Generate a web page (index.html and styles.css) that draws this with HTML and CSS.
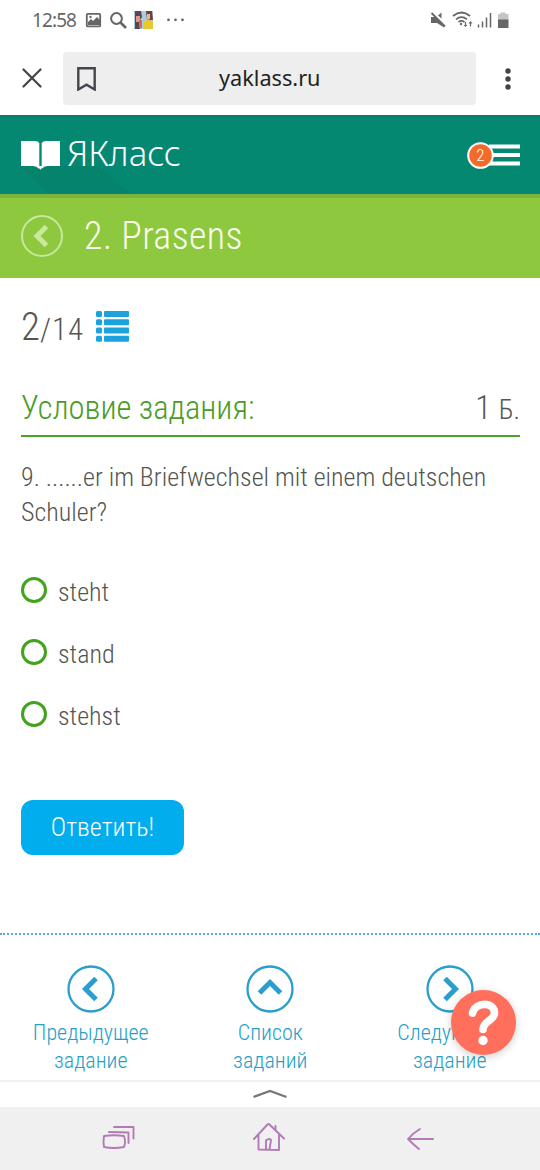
FILE: index.html
```html
<!DOCTYPE html>
<html lang="ru">
<head>
<meta charset="utf-8">
<title>ЯКласс</title>
<link rel="stylesheet" href="styles.css">
</head>
<body>
<div class="status">
  <span class="clock">12:58</span>
  <svg class="status-left" width="106" height="24" viewBox="84 8 106 24">
    <rect x="86.800" y="13.800" width="13.400" height="12.600" rx="1" fill="none" stroke="#666" stroke-width="1.800"/>
    <path d="M88 25v-3l3-3 2 2 4-4 3 3v5z" fill="#666"/><circle cx="90.500" cy="17" r="1.200" fill="#666"/>
    <circle cx="116.500" cy="18.500" r="5.400" fill="none" stroke="#666" stroke-width="2"/><path d="M120.500 22.500l5.500 5.500" stroke="#666" stroke-width="2.600"/>
    <rect x="134" y="11" width="19" height="18" fill="#a8cfdf"/>
    <path d="M135 11h6l1 6-2 3v9h-5v-9z" fill="#5b4650"/><path d="M136 16h4v6h-4z" fill="#df9a87"/>
    <path d="M146 11h6l1 9h-6z" fill="#704038"/><path d="M147 14h3v5h-3z" fill="#e8b59d"/>
    <path d="M143 22l5-3 5 3v7h-10z" fill="#e9c72e"/><path d="M139 20h3v8h-3z" fill="#d86660"/>
    <g fill="#666"><circle cx="168.500" cy="19.800" r="1.400"/><circle cx="175.500" cy="19.800" r="1.400"/><circle cx="182.500" cy="19.800" r="1.400"/></g>
  </svg>
  <svg class="status-right" width="82" height="24" viewBox="429 8 82 24">
    <path d="M431 17h4l9 9.500v1l-7-4.500h-6z" fill="#666"/><path d="M438 15.500l3.500-3v6z" fill="#666"/><path d="M431.500 13l13.500 13.500" stroke="#666" stroke-width="1.800"/>
    <g fill="none" stroke="#666" stroke-width="1.700"><path d="M453 16q8.500-7 17 0M456 19.300q5.500-4.500 11 0M458.500 22q3-2.200 6 0"/></g>
    <circle cx="461" cy="24" r="1.200" fill="#666"/>
    <path d="M463.500 25l2 2 2-2zM468.500 23.500l2-2.500 2 2.500z" fill="#666"/><path d="M465.500 22v4M470.500 22v4.500" stroke="#666" stroke-width="1.200"/>
    <path d="M478.500 24.500v3M482.500 21.500v6M486.500 17.500v10M490.500 13v14.500" stroke="#666" stroke-width="1.500"/>
    <path d="M498 14h2.500v-1.500h5V14h3v6H498z" fill="#c4c4c4"/><path d="M498 19.500h10.500V28H498z" fill="#666"/>
  </svg>
</div>
<div class="browser">
  <svg width="20" height="20" viewBox="0 0 20 20"><path d="M1.500 1.500l17 17M18.500 1.500l-17 17" stroke="#444" stroke-width="2.200" stroke-linecap="round"/></svg>
  <div class="address">
    <svg class="bookmark" width="19" height="24" viewBox="0 0 19 24"><path d="M1.300 1.300h16.400v21.200L9.500 17.700l-8.200 4.800z" fill="none" stroke="#45454d" stroke-width="2.400"/></svg>
    <span class="url">yaklass.ru</span>
  </div>
  <svg class="dots" width="6" height="22" viewBox="0 0 6 22" fill="#444"><circle cx="3" cy="3" r="2.700"/><circle cx="3" cy="11" r="2.700"/><circle cx="3" cy="19" r="2.700"/></svg>
</div>
<header class="brandbar">
  <svg class="shade" width="110" height="52" viewBox="0 0 110 52"><path d="M0 26l16-2L78 24l32 28H28z" fill="#078067"/></svg>
  <svg class="book" width="39" height="30" viewBox="0 0 39 30" fill="#fff"><path d="M0 0H14Q17 0 18.300 2V28Q15.500 25 12 25H0zM20.700 2Q22 0 25 0H39V25H27Q23 25 20.700 28zM17.300 25h4.200l-2.100 4z"/></svg>
  <span class="brand">ЯКласс</span>
  <svg class="menu" width="54" height="28" viewBox="0 0 54 28"><path d="M22 4.500h31M22 13h31M22 21.500h31" stroke="#fff" stroke-width="3.800"/><circle cx="13.500" cy="13.500" r="12.300" fill="#f26b2b" stroke="#fff" stroke-width="2"/><text class="badge" x="13.500" y="19" text-anchor="middle">2</text></svg>
</header>
<div class="topic">
  <svg width="42" height="42" viewBox="0 0 42 42" fill="none" stroke="#c8e89c"><circle cx="21" cy="21" r="20" stroke-width="2"/><path d="M25.500 11.500L16 21l9.500 9.500" stroke-width="5"/></svg>
  <h1>2. Prasens</h1>
</div>
<main>
  <div class="progress"><span class="now">2</span><span class="total">/14</span>
    <svg width="33" height="31" viewBox="0 0 33 31" fill="#1ba3e0"><rect width="6" height="6" rx="1.500"/><rect x="8" width="25" height="6" rx="1"/><rect y="8.300" width="6" height="6" rx="1.500"/><rect x="8" y="8.300" width="25" height="6" rx="1"/><rect y="16.500" width="6" height="6" rx="1.500"/><rect x="8" y="16.500" width="25" height="6" rx="1"/><rect y="24.800" width="6" height="6" rx="1.500"/><rect x="8" y="24.800" width="25" height="6" rx="1"/></svg>
  </div>
  <div class="heading"><h2>Условие задания:</h2><span class="points">1 <small>Б.</small></span></div>
  <p class="question">9. ......er im Briefwechsel mit einem deutschen<br>Schuler?</p>
  <div class="options">
    <div class="option"><i class="radio"></i><span>steht</span></div>
    <div class="option"><i class="radio"></i><span>stand</span></div>
    <div class="option"><i class="radio"></i><span>stehst</span></div>
  </div>
  <div class="answer"><span>Ответить!</span></div>
</main>
<nav class="pager">
  <div class="page-link"><svg width="48" height="48" viewBox="0 0 48 48"><circle cx="24" cy="24" r="22.500"/><path d="M29 13.500L18.500 24 29 34.500"/></svg><span>Предыдущее<br>задание</span></div>
  <div class="page-link"><svg width="48" height="48" viewBox="0 0 48 48"><circle cx="24" cy="24" r="22.500"/><path d="M13.500 28L24 17.500 34.500 28"/></svg><span>Список<br>заданий</span></div>
  <div class="page-link"><svg width="48" height="48" viewBox="0 0 48 48"><circle cx="24" cy="24" r="22.500"/><path d="M19 13.500L29.500 24 19 34.500"/></svg><span>Следующее<br>задание</span></div>
  <div class="help"><svg width="65" height="65" viewBox="0 0 65 65"><path d="M21.500 23C24.500 11.500 43.500 11.500 43.500 23C43.500 30.500 32 31 32 39.500" fill="none" stroke="#fff" stroke-width="7.600" stroke-linecap="round"/><circle cx="32" cy="50.500" r="4.700" fill="#fff"/></svg></div>
</nav>
<div class="drawer"><svg width="36" height="10" viewBox="0 0 36 10"><path d="M1.500 8L18 2l16.500 6" fill="none" stroke="#777" stroke-width="2.300"/></svg></div>
<footer class="system">
  <svg width="34" height="26" viewBox="0 0 34 26"><path d="M2 11Q12 9.500 22 11Q24 17 22 22Q12 24 2 22Q1 17 2 11zM7 7L26.500 7.500V18M12 2H31.500V13.500"/></svg>
  <svg width="34" height="30" viewBox="0 0 34 30"><path d="M2 17L15.500 2.500Q16.500 1.500 18 3L32 16.500M6.500 13V27.500L27 28V13M23.500 8V4M14 27V18.500Q17 16 19 18L17.500 27.500"/></svg>
  <svg width="28" height="24" viewBox="0 0 28 24"><path d="M27 12H2M14 2Q7 6 2 12Q8 18 13 22"/></svg>
</footer>
</body>
</html>
```

FILE: styles.css
```css
* { box-sizing: border-box; }
body { margin: 0; width: 540px; height: 1170px; overflow: hidden; background: #fff; color: #555650; font-family: "Roboto Condensed", Roboto, sans-serif; font-stretch: 75%; font-weight: 300; display: flex; flex-direction: column; }
svg { display: block; flex: none; }
h1, h2, p { margin: 0; font-weight: 300; white-space: nowrap; }
.status { height: 40px; padding: 8px 29px 0 32px; display: flex; align-items: flex-start; }
.clock { width: 52px; font: 400 19px/25px "Noto Sans", sans-serif; color: #666; letter-spacing: -.9px; }
.status-right { margin-left: auto; }
.browser { height: 75px; padding: 12px 29px 0 22px; display: flex; align-items: flex-start; }
.browser > svg { margin-top: 16px; }
.address { width: 413px; height: 53px; margin-left: 21px; background: #eee; border-radius: 4px; display: flex; align-items: center; }
.bookmark { margin-left: 14px; }
.url { margin: -1px 0 0 123px; font: 400 21.700px/30px "Noto Sans", sans-serif; color: #222; }
.browser > .dots { margin-left: auto; }
.brandbar { height: 79px; background: #058872; border-top: 2px solid #107966; padding: 24px 19px 0 21px; display: flex; align-items: flex-start; position: relative; }
.shade { position: absolute; left: 21px; top: 25px; opacity: .5; }
.book { position: relative; }
.brand { position: relative; margin: -8px 0 0 7px; font: 360 34.800px/40px "Noto Sans", sans-serif; color: #fff; }
.menu { margin: 1px 0 0 auto; }
.badge { font: 300 17px Roboto, sans-serif; font-stretch: 75%; fill: #fff; }
.topic { height: 84px; background: #8dc83f; border-top: 4px solid #7fb23d; padding: 17px 21px 0; display: flex; }
.topic h1 { margin-left: 21px; font-size: 38px; line-height: 42px; color: #fbffea; letter-spacing: .4px; }
main { padding: 0 20px 0 21px; height: 655px; }
.progress { height: 109px; padding-top: 28px; display: flex; align-items: flex-start; }
.now { font-size: 39px; line-height: 42px; }
.total { font-size: 31px; line-height: 47px; letter-spacing: 1px; }
.progress svg { margin: 5px 0 0 12px; }
.heading { height: 50px; border-bottom: 2px solid #4ba32a; display: flex; justify-content: space-between; align-items: flex-start; }
.heading h2 { font-size: 32.500px; line-height: 42px; color: #4a9b26; }
.points { font-size: 33px; line-height: 42px; white-space: nowrap; }
.points small { font-size: 27px; }
.question { margin-top: 23px; font-size: 26px; line-height: 35px; }
.options { margin-top: 47px; display: flex; flex-direction: column; gap: 36px; }
.option { display: flex; height: 26px; }
.radio { width: 26px; height: 26px; border: 3px solid #42a41d; border-radius: 50%; }
.option span { margin-left: 11px; font-size: 26px; line-height: 31px; }
.answer { margin-top: 73px; width: 163px; height: 55px; border-radius: 12px; background: #02adee; display: flex; justify-content: center; color: #fff; font-size: 26px; line-height: 55px; }
.pager { height: 147px; border-top: 2px dotted #59a9d0; padding: 30px 0 0 1px; display: grid; grid-template-columns: repeat(3, 179.500px); position: relative; }
.page-link { display: flex; flex-direction: column; align-items: center; text-align: center; font-size: 22px; line-height: 28px; color: #249fc7; }
.page-link svg { fill: none; stroke: #2a9fcd; stroke-width: 2.300px; margin-bottom: 6px; }
.page-link path { stroke-width: 5px; }
.help { position: absolute; left: 451px; top: 55px; width: 65px; height: 65px; border-radius: 50%; background: #ff6f5b; box-shadow: 0 2px 8px #0003; }
.drawer { height: 27px; border-top: 2px solid #f0f0f0; display: flex; justify-content: center; padding-top: 7px; }
.system { height: 63px; background: #f0f0f0; display: flex; justify-content: space-between; align-items: flex-start; padding: 15px 106px 0 102px; }
.system svg { fill: none; stroke: #b27bb5; stroke-width: 1.900px; stroke-linecap: round; stroke-linejoin: round; }
.system svg:first-child { margin-top: 3px; }
.system svg:nth-child(2) { margin-left: -5px; }
.system svg:last-child { margin-top: 5px; }
```
